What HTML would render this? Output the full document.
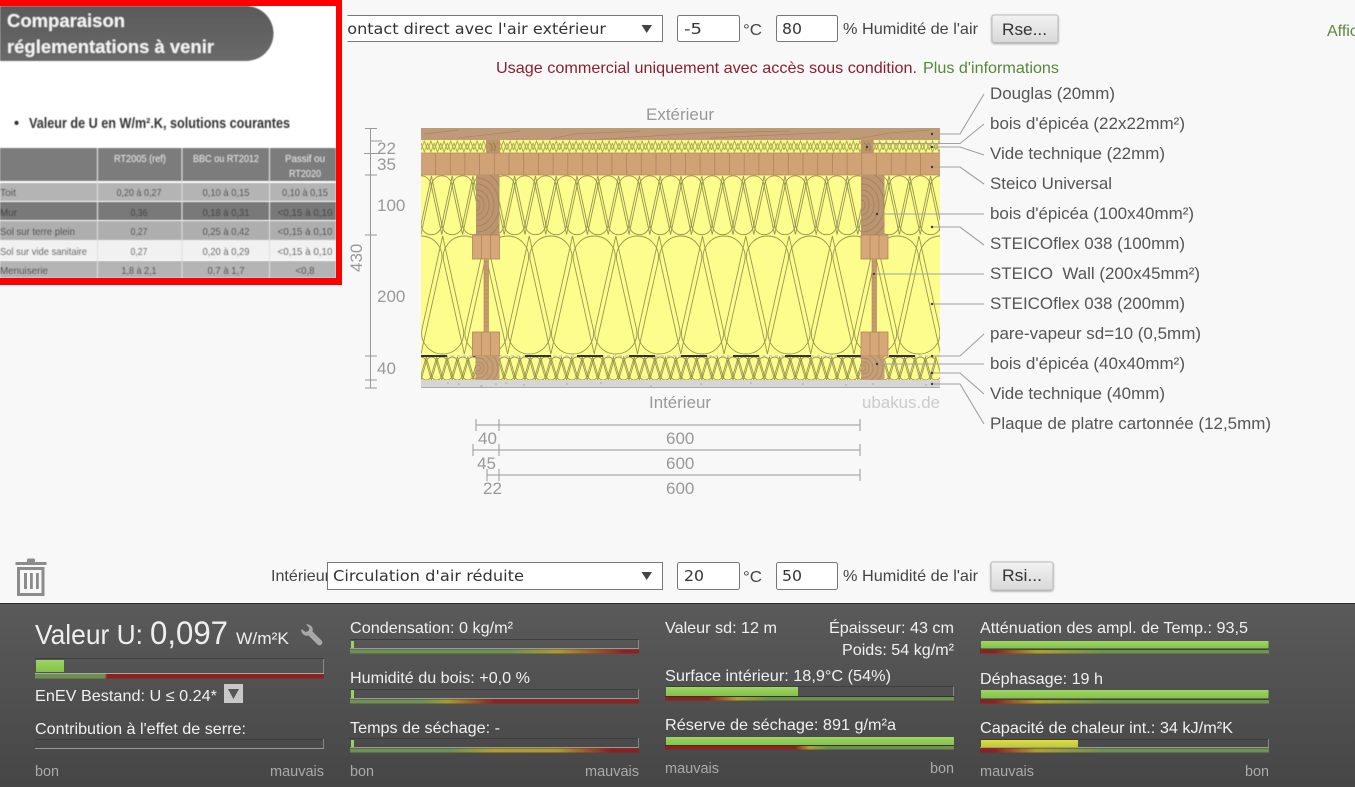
<!DOCTYPE html>
<html lang="fr"><head><meta charset="utf-8"><title>Comparaison</title>
<style>
html,body{margin:0;padding:0;background:#f8f8f8;width:1355px;height:787px;overflow:hidden}
svg{display:block;position:absolute;left:0;top:0;font-family:"Liberation Sans",Arial,sans-serif}
.d{font-family:"DejaVu Sans",sans-serif;font-size:15.5px;fill:#333}
.t{font-size:17px;fill:#555}
.m{font-size:17px;fill:#999}
.l{font-size:16px;fill:#f0f0f0}
.s{font-size:14.5px;fill:#aaa}
.h{font-size:16px;fill:#444}
.tb{font-size:10.5px;fill:#3c3c3c;text-anchor:middle}
.th{font-size:10.5px;fill:#e4e4e4;text-anchor:middle}
.tl{font-size:10.5px;fill:#3c3c3c}
</style></head><body>
<svg width="1355" height="787" viewBox="0 0 1355 787" xmlns="http://www.w3.org/2000/svg" xmlns:xlink="http://www.w3.org/1999/xlink">
<defs>
<g id="a100"><path d="M-9.970,13.150A10.200,10.200 0 1 1 9.970,13.150L0,59.500Z"/><path d="M0.430,47.350A10.200,10.200 0 1 0 20.370,47.350L10.400,1Z"/></g>
<g id="a200"><path d="M-20.500,26.550A21,21 0 1 1 20.500,26.550L0,119Z"/><path d="M1.150,93.450A21,21 0 1 0 42.150,93.450L21.650,1Z"/></g>
<g id="a40"><path d="M-4.800,6.390A5,5 0 1 1 4.800,6.390L0,23Z"/><path d="M0.400,16.600A5,5 0 1 0 10,16.600L5.200,0Z"/></g>
<g id="a40x5"><use href="#a40" x="0"/><use href="#a40" x="10.400"/><use href="#a40" x="20.800"/><use href="#a40" x="31.200"/><use href="#a40" x="41.600"/></g>
<pattern id="p22" patternUnits="userSpaceOnUse" x="421" y="140" width="6.600" height="13">
<g fill="none" stroke="#a5a44e" stroke-width=".9">
<path d="M0,10L3.300,1L6.600,10"/><path d="M0,3L3.300,12L6.600,3"/>
</g></pattern>
<clipPath id="cl1"><rect x="421" y="175" width="519" height="60.500"/></clipPath>
<clipPath id="cl2"><rect x="421" y="235" width="519" height="121"/></clipPath>
<clipPath id="cl3"><rect x="421" y="356" width="519" height="25"/></clipPath>
<clipPath id="c100a"><rect x="476" y="175" width="23.500" height="60"/></clipPath>
<clipPath id="c100b"><rect x="861" y="175" width="23.500" height="60"/></clipPath>
<clipPath id="c40a"><rect x="475.500" y="356" width="24" height="24"/></clipPath>
<clipPath id="c40b"><rect x="861" y="356" width="23.500" height="24"/></clipPath>
<linearGradient id="bar" x1="0" y1="0" x2="0" y2="1"><stop offset="0" stop-color="#5a5a5a"/><stop offset="1" stop-color="#464646"/></linearGradient>
<linearGradient id="pill" x1="0" y1="0" x2="0" y2="1"><stop offset="0" stop-color="#5a5a5a"/><stop offset="1" stop-color="#6a6a6a"/></linearGradient>
<linearGradient id="btn" x1="0" y1="0" x2="0" y2="1"><stop offset="0" stop-color="#f2f2f2"/><stop offset="1" stop-color="#d8d8d8"/></linearGradient>
<linearGradient id="gr" x1="0" y1="0" x2="0" y2="1"><stop offset="0" stop-color="#a0d468"/><stop offset=".5" stop-color="#8fcb55"/><stop offset="1" stop-color="#85c04b"/></linearGradient>
<linearGradient id="ye" x1="0" y1="0" x2="0" y2="1"><stop offset="0" stop-color="#dede3c"/><stop offset="1" stop-color="#c2c82e"/></linearGradient>
<linearGradient id="s0"><stop offset="0" stop-color="#6f9150"/><stop offset=".24" stop-color="#6f9150"/><stop offset=".25" stop-color="#8f2020"/><stop offset="1" stop-color="#8f2020"/></linearGradient>
<linearGradient id="s1"><stop offset="0" stop-color="#6f9150"/><stop offset=".55" stop-color="#6f9150"/><stop offset=".72" stop-color="#b0982c"/><stop offset=".95" stop-color="#8f2020"/><stop offset="1" stop-color="#8f2020"/></linearGradient>
<linearGradient id="s2"><stop offset="0" stop-color="#6f9150"/><stop offset=".25" stop-color="#6f9150"/><stop offset=".34" stop-color="#a89a2c"/><stop offset=".5" stop-color="#8f2020"/><stop offset="1" stop-color="#8f2020"/></linearGradient>
<linearGradient id="s3"><stop offset="0" stop-color="#6f9150"/><stop offset=".35" stop-color="#6f9150"/><stop offset=".5" stop-color="#b0a02c"/><stop offset=".72" stop-color="#b0982c"/><stop offset=".9" stop-color="#8f2020"/><stop offset="1" stop-color="#8f2020"/></linearGradient>
<linearGradient id="s4"><stop offset="0" stop-color="#8f2020"/><stop offset=".15" stop-color="#8f2020"/><stop offset=".25" stop-color="#b0a02c"/><stop offset=".36" stop-color="#6f9150"/><stop offset="1" stop-color="#6f9150"/></linearGradient>
<linearGradient id="s5"><stop offset="0" stop-color="#8f2020"/><stop offset=".45" stop-color="#8f2020"/><stop offset=".5" stop-color="#b0a02c"/><stop offset=".56" stop-color="#6f9150"/><stop offset="1" stop-color="#6f9150"/></linearGradient>
<linearGradient id="s6"><stop offset="0" stop-color="#8f2020"/><stop offset=".05" stop-color="#8f2020"/><stop offset=".2" stop-color="#b0a02c"/><stop offset=".42" stop-color="#6f9150"/><stop offset="1" stop-color="#6f9150"/></linearGradient>
<filter id="bl" x="0" y="0" width="100%" height="100%"><feGaussianBlur stdDeviation=".45"/></filter>
<filter id="bl2" x="0" y="0" width="100%" height="100%"><feGaussianBlur stdDeviation=".3"/></filter>
<filter id="sh" x="-10%" y="-10%" width="120%" height="130%"><feDropShadow dx="0" dy="1" stdDeviation="1" flood-color="#000" flood-opacity=".35"/></filter>
</defs>

<rect width="1355" height="787" fill="#f8f8f8"/>

<!-- top controls -->
<rect x="327.500" y="15.500" width="335" height="26" fill="#fff" stroke="#777"/>
<text class="d" x="336" y="34" textLength="270" lengthAdjust="spacingAndGlyphs">Contact direct avec l'air extérieur</text>
<path d="M641.500,25H652L646.700,33Z" fill="#444"/>
<rect x="677.500" y="15.500" width="62" height="26" rx="2" fill="#fff" stroke="#777"/>
<text class="d" x="684" y="34" textLength="18" lengthAdjust="spacingAndGlyphs">-5</text>
<text class="h" x="743" y="35" textLength="19" lengthAdjust="spacingAndGlyphs">°C</text>
<rect x="776.500" y="15.500" width="61" height="26" rx="2" fill="#fff" stroke="#777"/>
<text class="d" x="782" y="34" textLength="20" lengthAdjust="spacingAndGlyphs">80</text>
<text class="h" x="843" y="34" textLength="135" lengthAdjust="spacingAndGlyphs">% Humidité de l'air</text>
<rect x="992" y="15" width="66" height="27.500" rx="2" fill="url(#btn)" stroke="#bbb" filter="url(#sh)"/>
<text x="1002" y="35" font-size="17" fill="#333" textLength="45" lengthAdjust="spacingAndGlyphs">Rse...</text>
<text x="1327" y="36" font-size="16" fill="#5a8a3c">Afficher</text>
<text x="496" y="73" font-size="16" fill="#8b2030" textLength="421" lengthAdjust="spacingAndGlyphs">Usage commercial uniquement avec accès sous condition.</text>
<text x="923" y="73" font-size="16" fill="#55883a" textLength="136" lengthAdjust="spacingAndGlyphs">Plus d'informations</text>

<!-- diagram -->
<g filter="url(#bl2)">
<rect x="421" y="175" width="519" height="181" fill="#fdfd8e"/>
<g clip-path="url(#cl1)" fill="none" stroke="#97964f" stroke-width=".9">
<g transform="translate(0,175)">
<use href="#a100" x="421"/><use href="#a100" x="441.800"/><use href="#a100" x="462.600"/><use href="#a100" x="483.400"/><use href="#a100" x="504.200"/><use href="#a100" x="525"/><use href="#a100" x="545.800"/><use href="#a100" x="566.600"/><use href="#a100" x="587.400"/><use href="#a100" x="608.200"/><use href="#a100" x="629"/><use href="#a100" x="649.800"/><use href="#a100" x="670.600"/><use href="#a100" x="691.400"/><use href="#a100" x="712.200"/><use href="#a100" x="733"/><use href="#a100" x="753.800"/><use href="#a100" x="774.600"/><use href="#a100" x="795.400"/><use href="#a100" x="816.200"/><use href="#a100" x="837"/><use href="#a100" x="857.800"/><use href="#a100" x="878.600"/><use href="#a100" x="899.400"/><use href="#a100" x="920.200"/><use href="#a100" x="941"/>
</g></g>
<g clip-path="url(#cl2)" fill="none" stroke="#97964f" stroke-width=".9">
<g transform="translate(0,235)">
<use href="#a200" x="421"/><use href="#a200" x="464.300"/><use href="#a200" x="507.600"/><use href="#a200" x="550.900"/><use href="#a200" x="594.200"/><use href="#a200" x="637.500"/><use href="#a200" x="680.800"/><use href="#a200" x="724.100"/><use href="#a200" x="767.400"/><use href="#a200" x="810.700"/><use href="#a200" x="854"/><use href="#a200" x="897.300"/><use href="#a200" x="940.600"/>
</g></g>
<rect x="421" y="356" width="519" height="24" fill="#fdfd8e"/>
<g clip-path="url(#cl3)" fill="none" stroke="#97964f" stroke-width=".9">
<g transform="translate(0,357)">
<use href="#a40x5" x="421"/><use href="#a40x5" x="473"/><use href="#a40x5" x="525"/><use href="#a40x5" x="577"/><use href="#a40x5" x="629"/><use href="#a40x5" x="681"/><use href="#a40x5" x="733"/><use href="#a40x5" x="785"/><use href="#a40x5" x="837"/><use href="#a40x5" x="889"/>
</g></g>
<rect x="421" y="380" width="519" height="8" fill="#d6d6d6"/>
<path d="M421,387.500H940" stroke="#aaa"/>
<path d="M447,383h2M458,384h2M480,386h3M495,384h2M505,383h2M523,385h2M566,384h2M600,383h2M650,386h2M700,384h2M750,383h2M802,384h2M845,385h2M872,384h2M925,385h2" stroke="#aaa"/>
<!-- vapour -->
<path d="M421,356H940" stroke="#ccc" stroke-dasharray="3 3" stroke-width="1.500"/>
<path d="M421,356h26M473,356h26M525,356h26M577,356h26M629,356h26M681,356h26M733,356h26M785,356h26M837,356h26M889,356h26" stroke="#333" stroke-width="2"/>
<!-- Douglas -->
<rect x="421" y="128" width="519" height="12" fill="#bf9a77"/>
<path d="M424,134L458,130M458,138L520,131M550,139L575,134L640,131M590,140L700,133L790,131M710,138L840,132M850,140L890,133L930,130" stroke="#a98560" stroke-width=".8" fill="none"/>
<!-- vide 22 -->
<rect x="421" y="140" width="519" height="13" fill="#f9f98c"/>
<rect x="421" y="140" width="519" height="13" fill="url(#p22)"/>
<rect x="486" y="140" width="14" height="13" fill="#bd936b"/>
<rect x="861" y="140" width="12.500" height="13" fill="#bd936b"/>
<path d="M489,143q5,3 2,8M493,143q4,4 1,8M864,143q5,3 2,8M868,143q4,4 1,8" stroke="#9c7854" fill="none"/>
<!-- Steico universal -->
<rect x="421" y="153" width="519" height="22" fill="#d1a274"/>
<path d="M435.500,153v22M450.200,153v22M464.900,153v22M479.600,153v22M494.300,153v22M509,153v22M523.700,153v22M538.400,153v22M553.100,153v22M567.800,153v22M582.500,153v22M597.200,153v22M611.900,153v22M626.600,153v22M641.300,153v22M656,153v22M670.700,153v22M685.400,153v22M700.100,153v22M714.800,153v22M729.500,153v22M744.200,153v22M758.900,153v22M773.600,153v22M788.300,153v22M803,153v22M817.700,153v22M832.400,153v22M847.100,153v22M861.800,153v22M876.500,153v22M891.200,153v22M905.900,153v22M920.600,153v22" stroke="#ad8560" stroke-width=".8"/>
<path d="M421,175H940M421,153H940" stroke="#b58d63" stroke-width=".7"/>
<!-- posts -->
<g>
<rect x="476" y="175" width="23.500" height="60" fill="#bb9570"/>
<g clip-path="url(#c100a)" fill="none" stroke="#a58260" stroke-width=".9">
<ellipse cx="477" cy="205" rx="3" ry="5"/><ellipse cx="477" cy="205" rx="7" ry="10"/><ellipse cx="477" cy="205" rx="12" ry="15"/><ellipse cx="477" cy="205" rx="17" ry="21"/><ellipse cx="477" cy="205" rx="22" ry="27"/><ellipse cx="477" cy="205" rx="27" ry="34"/>
</g>
<rect x="472.500" y="235" width="27" height="24" fill="#d6a878" stroke="#ae8559" stroke-width=".8"/>
<path d="M481.500,235V259M490.500,235V259" stroke="#ae8559" stroke-width=".8"/>
<rect x="484" y="259" width="4.500" height="73" fill="#c99c6f"/>
<path d="M484,259V332M488.500,259V332" stroke="#a98058" stroke-width=".6"/>
<path d="M484,262h4.500M484,266h4.500M484,270h4.500M484,274h4.500M484,278h4.500M484,282h4.500M484,286h4.500M484,290h4.500M484,294h4.500M484,298h4.500M484,302h4.500M484,306h4.500M484,310h4.500M484,314h4.500M484,318h4.500M484,322h4.500M484,326h4.500" stroke="#b08860" stroke-width=".7"/>
<rect x="472.500" y="332" width="27" height="24" fill="#d6a878" stroke="#ae8559" stroke-width=".8"/>
<path d="M481.500,332V356M490.500,332V356" stroke="#ae8559" stroke-width=".8"/>
<rect x="475.500" y="356" width="24" height="24" fill="#c79e76"/>
<g clip-path="url(#c40a)" fill="none" stroke="#ad8a66" stroke-width=".9">
<ellipse cx="478" cy="368" rx="2.500" ry="3"/><ellipse cx="478" cy="368" rx="6" ry="6"/><ellipse cx="478" cy="368" rx="10" ry="10"/><ellipse cx="478" cy="368" rx="15" ry="14"/><ellipse cx="478" cy="368" rx="20" ry="18"/>
</g>
<rect x="861" y="175" width="23.500" height="60" fill="#bb9570"/>
<g clip-path="url(#c100b)" fill="none" stroke="#a58260" stroke-width=".9">
<ellipse cx="862" cy="205" rx="3" ry="5"/><ellipse cx="862" cy="205" rx="7" ry="10"/><ellipse cx="862" cy="205" rx="12" ry="15"/><ellipse cx="862" cy="205" rx="17" ry="21"/><ellipse cx="862" cy="205" rx="22" ry="27"/><ellipse cx="862" cy="205" rx="27" ry="34"/>
</g>
<rect x="861" y="235" width="27" height="24" fill="#d6a878" stroke="#ae8559" stroke-width=".8"/>
<path d="M870,235V259M879,235V259" stroke="#ae8559" stroke-width=".8"/>
<rect x="872" y="259" width="4.500" height="73" fill="#c99c6f"/>
<path d="M872,259V332M876.500,259V332" stroke="#a98058" stroke-width=".6"/>
<path d="M872,262h4.500M872,266h4.500M872,270h4.500M872,274h4.500M872,278h4.500M872,282h4.500M872,286h4.500M872,290h4.500M872,294h4.500M872,298h4.500M872,302h4.500M872,306h4.500M872,310h4.500M872,314h4.500M872,318h4.500M872,322h4.500M872,326h4.500" stroke="#b08860" stroke-width=".7"/>
<rect x="861" y="332" width="27" height="24" fill="#d6a878" stroke="#ae8559" stroke-width=".8"/>
<path d="M870,332V356M879,332V356" stroke="#ae8559" stroke-width=".8"/>
<rect x="861" y="356" width="23.500" height="24" fill="#c79e76"/>
<g clip-path="url(#c40b)" fill="none" stroke="#ad8a66" stroke-width=".9">
<ellipse cx="863" cy="368" rx="2.500" ry="3"/><ellipse cx="863" cy="368" rx="6" ry="6"/><ellipse cx="863" cy="368" rx="10" ry="10"/><ellipse cx="863" cy="368" rx="15" ry="14"/><ellipse cx="863" cy="368" rx="20" ry="18"/>
</g>
</g>
</g>

<!-- leaders -->
<g fill="none" stroke="#a0a0a0" stroke-width="1.100">
<path d="M932,134H960L984,94"/>
<path d="M867,147L874,143.500H960L984,124"/>
<path d="M932,147H960L984,155"/>
<path d="M932,167H960L984,184"/>
<path d="M877,214H984"/>
<path d="M932,227H960L984,245"/>
<path d="M874,274H984"/>
<path d="M932,304H984"/>
<path d="M932,356H960L984,334"/>
<path d="M877,364H984"/>
<path d="M932,373H960L984,394"/>
<path d="M932,384H960L984,424"/>
</g>
<g fill="#4a3a30">
<circle cx="932" cy="134" r="1.200"/><circle cx="867" cy="147" r="1.200"/><circle cx="932" cy="147" r="1.200"/><circle cx="932" cy="167" r="1.200"/><circle cx="877" cy="214" r="1.200"/><circle cx="932" cy="227" r="1.200"/><circle cx="874" cy="274" r="1.200"/><circle cx="932" cy="304" r="1.200"/><circle cx="932" cy="356" r="1.200"/><circle cx="877" cy="364" r="1.200"/><circle cx="932" cy="373" r="1.200"/><circle cx="932" cy="384" r="1.200"/>
</g>

<!-- labels -->
<text class="t" x="990" y="99" textLength="125" lengthAdjust="spacingAndGlyphs">Douglas (20mm)</text>
<text class="t" x="990" y="129" textLength="195" lengthAdjust="spacingAndGlyphs">bois d'épicéa (22x22mm²)</text>
<text class="t" x="990" y="159" textLength="175" lengthAdjust="spacingAndGlyphs">Vide technique (22mm)</text>
<text class="t" x="990" y="189" textLength="122" lengthAdjust="spacingAndGlyphs">Steico Universal</text>
<text class="t" x="990" y="219" textLength="204" lengthAdjust="spacingAndGlyphs">bois d'épicéa (100x40mm²)</text>
<text class="t" x="990" y="249" textLength="195" lengthAdjust="spacingAndGlyphs">STEICOflex 038 (100mm)</text>
<text class="t" x="990" y="279" textLength="210" lengthAdjust="spacingAndGlyphs" xml:space="preserve">STEICO  Wall (200x45mm²)</text>
<text class="t" x="990" y="309" textLength="195" lengthAdjust="spacingAndGlyphs">STEICOflex 038 (200mm)</text>
<text class="t" x="990" y="339" textLength="211" lengthAdjust="spacingAndGlyphs">pare-vapeur sd=10 (0,5mm)</text>
<text class="t" x="990" y="369" textLength="195" lengthAdjust="spacingAndGlyphs">bois d'épicéa (40x40mm²)</text>
<text class="t" x="990" y="399" textLength="175" lengthAdjust="spacingAndGlyphs">Vide technique (40mm)</text>
<text class="t" x="990" y="429" textLength="281" lengthAdjust="spacingAndGlyphs">Plaque de platre cartonnée (12,5mm)</text>

<text class="m" x="646" y="120" textLength="68" lengthAdjust="spacingAndGlyphs">Extérieur</text>
<text class="m" x="649" y="408" textLength="62" lengthAdjust="spacingAndGlyphs">Intérieur</text>
<text x="862" y="408" font-size="17" fill="#cbcbcb" textLength="78" lengthAdjust="spacingAndGlyphs">ubakus.de</text>

<!-- left dims -->
<g stroke="#999" stroke-width="1" fill="none">
<path d="M370.500,128V388"/>
<path d="M365,128.500H377M370,141H382M364,153.500H382M365,175H377M365,235H377M365,356H377M365,380H377M365,388H377"/>
<path d="M476,425H860M476,419V431M499,419V431M860,419V431"/>
<path d="M473,450H860M473,444V456M499,444V456M860,444V456"/>
<path d="M487,475H860M487,469V481M499,469V481M860,469V481"/>
</g>
<text class="m" x="377" y="154">22</text>
<text class="m" x="377" y="170">35</text>
<text class="m" x="377" y="211">100</text>
<text class="m" x="377" y="302">200</text>
<text class="m" x="377" y="374">40</text>
<text class="m" transform="translate(362,272) rotate(-90)">430</text>
<text class="m" x="478" y="444">40</text>
<text class="m" x="666" y="444">600</text>
<text class="m" x="477" y="469">45</text>
<text class="m" x="666" y="469">600</text>
<text class="m" x="483" y="494">22</text>
<text class="m" x="666" y="494">600</text>

<!-- image with red border -->
<rect x="342" y="0" width="5.500" height="290" fill="#f8f8f8"/>
<rect x="0" y="0" width="342" height="285" fill="#f00"/>
<rect x="0" y="6" width="336" height="272" fill="#fff"/>
<g filter="url(#bl)">
<path d="M0,6H246A27.500,27.500 0 0 1 246,61H0Z" fill="url(#pill)"/>
<text x="7" y="27" font-size="18.500" font-weight="bold" fill="#f4f4f4" textLength="118" lengthAdjust="spacingAndGlyphs">Comparaison</text>
<text x="7" y="53" font-size="18.500" font-weight="bold" fill="#f4f4f4" textLength="207" lengthAdjust="spacingAndGlyphs">réglementations à venir</text>
<text x="14" y="128" font-size="14.500" font-weight="bold" fill="#333">•</text>
<text x="29" y="128" font-size="14.500" font-weight="bold" fill="#333" textLength="261" lengthAdjust="spacingAndGlyphs">Valeur de U en W/m².K, solutions courantes</text>
<rect x="0" y="148" width="336" height="33" fill="#7c7c7c"/>
<rect x="0" y="183" width="336" height="18" fill="#b4b4b4"/>
<rect x="0" y="202" width="336" height="18" fill="#797979"/>
<rect x="0" y="221" width="336" height="19" fill="#aeaeae"/>
<rect x="0" y="240" width="336" height="20" fill="#f1f1f1"/>
<rect x="0" y="261" width="336" height="17" fill="#b4b4b4"/>
<path d="M97.500,148V278M182,148V278M269.500,148V278" stroke="#ddd" stroke-width="1"/>
<text class="th" x="140" y="162" textLength="52" lengthAdjust="spacingAndGlyphs">RT2005 (ref)</text>
<text class="th" x="226" y="162" textLength="66" lengthAdjust="spacingAndGlyphs">BBC  ou RT2012</text>
<text class="th" x="305" y="162" textLength="40" lengthAdjust="spacingAndGlyphs">Passif  ou</text>
<text class="th" x="305" y="177" textLength="32" lengthAdjust="spacingAndGlyphs">RT2020</text>
<text class="tl" x="0" y="196" textLength="16" lengthAdjust="spacingAndGlyphs">Toit</text>
<text class="tl" x="0" y="216" textLength="17" lengthAdjust="spacingAndGlyphs">Mur</text>
<text class="tl" x="0" y="235" textLength="75" lengthAdjust="spacingAndGlyphs">Sol sur terre plein</text>
<text class="tl" x="0" y="255" textLength="87" lengthAdjust="spacingAndGlyphs">Sol sur vide sanitaire</text>
<text class="tl" x="0" y="274" textLength="48" lengthAdjust="spacingAndGlyphs">Menuiserie</text>
<text class="tb" x="139" y="196" textLength="45" lengthAdjust="spacingAndGlyphs">0,20 à 0,27</text><text class="tb" x="226" y="196" textLength="47" lengthAdjust="spacingAndGlyphs">0,10 à 0,15</text><text class="tb" x="305" y="196" textLength="46" lengthAdjust="spacingAndGlyphs">0,10 à 0,15</text>
<text class="tb" x="139" y="216" textLength="17" lengthAdjust="spacingAndGlyphs">0,36</text><text class="tb" x="226" y="216" textLength="47" lengthAdjust="spacingAndGlyphs">0,18 à 0,31</text><text class="tb" x="305" y="216" textLength="55" lengthAdjust="spacingAndGlyphs">&lt;0,15 à 0,10</text>
<text class="tb" x="139" y="235" textLength="17" lengthAdjust="spacingAndGlyphs">0,27</text><text class="tb" x="226" y="235" textLength="47" lengthAdjust="spacingAndGlyphs">0,25 à 0,42</text><text class="tb" x="305" y="235" textLength="55" lengthAdjust="spacingAndGlyphs">&lt;0,15 à 0,10</text>
<text class="tb" x="139" y="255" textLength="17" lengthAdjust="spacingAndGlyphs">0,27</text><text class="tb" x="226" y="255" textLength="47" lengthAdjust="spacingAndGlyphs">0,20 à 0,29</text><text class="tb" x="305" y="255" textLength="55" lengthAdjust="spacingAndGlyphs">&lt;0,15 à 0,10</text>
<text class="tb" x="139" y="274" textLength="35" lengthAdjust="spacingAndGlyphs">1,8 à 2,1</text><text class="tb" x="226" y="274" textLength="37" lengthAdjust="spacingAndGlyphs">0,7 à 1,7</text><text class="tb" x="305" y="274" textLength="19" lengthAdjust="spacingAndGlyphs">&lt;0,8</text>
</g>

<!-- trash -->
<g fill="#8c8c8c">
<path d="M27,562v-2a1.500,1.500 0 0 1 1.500,-1.500h5a1.500,1.500 0 0 1 1.500,1.500v2h11.500v3h-31v-3z"/>
<path d="M17,567h27.500v29h-27.500zM20,570v23h21.500v-23z" fill-rule="evenodd"/>
<rect x="24" y="573" width="3" height="16"/><rect x="30" y="573" width="2.800" height="16"/><rect x="36" y="573" width="2.800" height="16"/>
</g>

<!-- interior controls -->
<text class="h" x="271" y="581" textLength="59" lengthAdjust="spacingAndGlyphs">Intérieur</text>
<rect x="327.500" y="562.500" width="335" height="27" fill="#fff" stroke="#777"/>
<text class="d" x="333" y="581" textLength="191" lengthAdjust="spacingAndGlyphs">Circulation d'air réduite</text>
<path d="M641.500,572H652L646.700,580Z" fill="#444"/>
<rect x="677.500" y="562.500" width="62" height="27" rx="2" fill="#fff" stroke="#777"/>
<text class="d" x="684" y="581" textLength="20" lengthAdjust="spacingAndGlyphs">20</text>
<text class="h" x="743" y="582" textLength="19" lengthAdjust="spacingAndGlyphs">°C</text>
<rect x="776.500" y="562.500" width="61" height="27" rx="2" fill="#fff" stroke="#777"/>
<text class="d" x="782" y="581" textLength="20" lengthAdjust="spacingAndGlyphs">50</text>
<text class="h" x="843" y="581" textLength="135" lengthAdjust="spacingAndGlyphs">% Humidité de l'air</text>
<rect x="991" y="562" width="62" height="28" rx="2" fill="url(#btn)" stroke="#bbb" filter="url(#sh)"/>
<text x="1002" y="581" font-size="17" fill="#333" textLength="40" lengthAdjust="spacingAndGlyphs">Rsi...</text>

<!-- bottom bar -->
<rect x="0" y="603" width="1355" height="184" fill="url(#bar)"/>
<rect x="0" y="603" width="1355" height="1" fill="#2c2c2c"/>

<!-- col 1 -->
<text x="35" y="644" font-size="28" fill="#eee" textLength="108" lengthAdjust="spacingAndGlyphs">Valeur U:</text>
<text x="150" y="644" font-size="32" fill="#eee" textLength="78" lengthAdjust="spacingAndGlyphs">0,097</text>
<text x="236" y="644" font-size="17" fill="#eee" textLength="53" lengthAdjust="spacingAndGlyphs">W/m²K</text>
<path d="M301.500,629a5.500,5.500 0 0 0 7,6.500l9,9a2.500,2.500 0 0 0 4,-4l-9,-9a5.500,5.500 0 0 0 -6.500,-7l3.500,3.500l-1,3l-3,1z" fill="#a8a8a8"/>
<g fill="none" stroke-width="1">
<path d="M35,658.500H323.500V673" stroke="#3e3e3e"/><path d="M323.500,659V673" stroke="#888"/><path d="M35,673.500H324" stroke="#aaa"/>
</g>
<rect x="36" y="660" width="28" height="12" fill="url(#gr)"/>
<rect x="35" y="674" width="289" height="4.500" fill="url(#s0)"/>
<text class="l" x="35" y="701" textLength="182" lengthAdjust="spacingAndGlyphs">EnEV Bestand: U ≤ 0.24*</text>
<rect x="224" y="684" width="19" height="19" fill="#c8c8c8"/>
<path d="M228,689h11l-5.500,10z" fill="#555"/>
<text class="l" x="35" y="734" textLength="211" lengthAdjust="spacingAndGlyphs">Contribution à l'effet de serre:</text>
<path d="M35,739.500H323" stroke="#3e3e3e"/><path d="M323.500,739V748" stroke="#888"/><path d="M35,748.500H324" stroke="#999"/>
<text class="s" x="35" y="776" textLength="24" lengthAdjust="spacingAndGlyphs">bon</text>
<text class="s" x="270" y="776" textLength="54" lengthAdjust="spacingAndGlyphs">mauvais</text>

<!-- col 2 -->
<text class="l" x="350" y="633" textLength="163" lengthAdjust="spacingAndGlyphs">Condensation: 0 kg/m²</text>
<path d="M350,639.500H638" stroke="#3e3e3e"/><path d="M638.500,640V648" stroke="#888"/><path d="M350,648.500H639" stroke="#999"/>
<rect x="351" y="641" width="3" height="7" fill="#9ad163"/>
<rect x="350" y="649.500" width="289" height="4" fill="url(#s1)"/>
<text class="l" x="350" y="683" textLength="180" lengthAdjust="spacingAndGlyphs">Humidité du bois: +0,0 %</text>
<path d="M350,689.500H638" stroke="#3e3e3e"/><path d="M638.500,689V698" stroke="#888"/><path d="M350,698.500H639" stroke="#999"/>
<rect x="351" y="690" width="3" height="8" fill="#9ad163"/>
<rect x="350" y="699.500" width="289" height="4" fill="url(#s2)"/>
<text class="l" x="350" y="733" textLength="150" lengthAdjust="spacingAndGlyphs">Temps de séchage: -</text>
<path d="M350,738.500H638" stroke="#3e3e3e"/><path d="M638.500,738V747" stroke="#888"/><path d="M350,747.500H639" stroke="#999"/>
<rect x="351" y="740" width="3" height="7" fill="#9ad163"/>
<rect x="350" y="748.500" width="289" height="4" fill="url(#s3)"/>
<text class="s" x="350" y="776" textLength="24" lengthAdjust="spacingAndGlyphs">bon</text>
<text class="s" x="585" y="776" textLength="54" lengthAdjust="spacingAndGlyphs">mauvais</text>

<!-- col 3 -->
<text class="l" x="665" y="633" textLength="112" lengthAdjust="spacingAndGlyphs">Valeur sd: 12 m</text>
<text class="l" x="829" y="633" textLength="125" lengthAdjust="spacingAndGlyphs">Épaisseur: 43 cm</text>
<text class="l" x="842" y="655" textLength="112" lengthAdjust="spacingAndGlyphs">Poids: 54 kg/m²</text>
<text class="l" x="665" y="681" textLength="226" lengthAdjust="spacingAndGlyphs">Surface intérieur: 18,9°C (54%)</text>
<path d="M666,686.500H953" stroke="#3e3e3e"/><path d="M953.500,687V696" stroke="#888"/>
<rect x="666" y="687" width="132" height="9" fill="url(#gr)"/>
<path d="M665,696.500H954" stroke="#333"/>
<rect x="665" y="697" width="289" height="3.500" fill="url(#s4)"/>
<text class="l" x="665" y="730" textLength="231" lengthAdjust="spacingAndGlyphs">Réserve de séchage: 891 g/m²a</text>
<rect x="666" y="737" width="288" height="8.500" fill="url(#gr)"/>
<path d="M665,745.500H954" stroke="#333"/>
<rect x="665" y="746" width="289" height="3.500" fill="url(#s5)"/>
<text class="s" x="665" y="773" textLength="54" lengthAdjust="spacingAndGlyphs">mauvais</text>
<text class="s" x="930" y="773" textLength="24" lengthAdjust="spacingAndGlyphs">bon</text>

<!-- col 4 -->
<text class="l" x="980" y="633" textLength="268" lengthAdjust="spacingAndGlyphs">Atténuation des ampl. de Temp.: 93,5</text>
<rect x="981" y="641" width="287.500" height="7.500" fill="url(#gr)"/>
<path d="M980,649H1269" stroke="#333"/>
<rect x="980" y="650" width="289" height="3.500" fill="url(#s6)"/>
<text class="l" x="980" y="684" textLength="123" lengthAdjust="spacingAndGlyphs">Déphasage: 19 h</text>
<rect x="981" y="690" width="287.500" height="8.500" fill="url(#gr)"/>
<path d="M980,699H1269" stroke="#333"/>
<rect x="980" y="700" width="289" height="3.500" fill="url(#s6)"/>
<text class="l" x="980" y="733" textLength="253" lengthAdjust="spacingAndGlyphs">Capacité de chaleur int.: 34 kJ/m²K</text>
<path d="M980,739.500H1268" stroke="#3e3e3e"/><path d="M1268.500,739V748" stroke="#888"/><path d="M980,747.500H1269" stroke="#999"/>
<rect x="981" y="740" width="97" height="7" fill="url(#ye)"/>
<rect x="980" y="748.500" width="289" height="4" fill="url(#s6)"/>
<text class="s" x="980" y="776" textLength="54" lengthAdjust="spacingAndGlyphs">mauvais</text>
<text class="s" x="1245" y="776" textLength="24" lengthAdjust="spacingAndGlyphs">bon</text>
</svg>
</body></html>
